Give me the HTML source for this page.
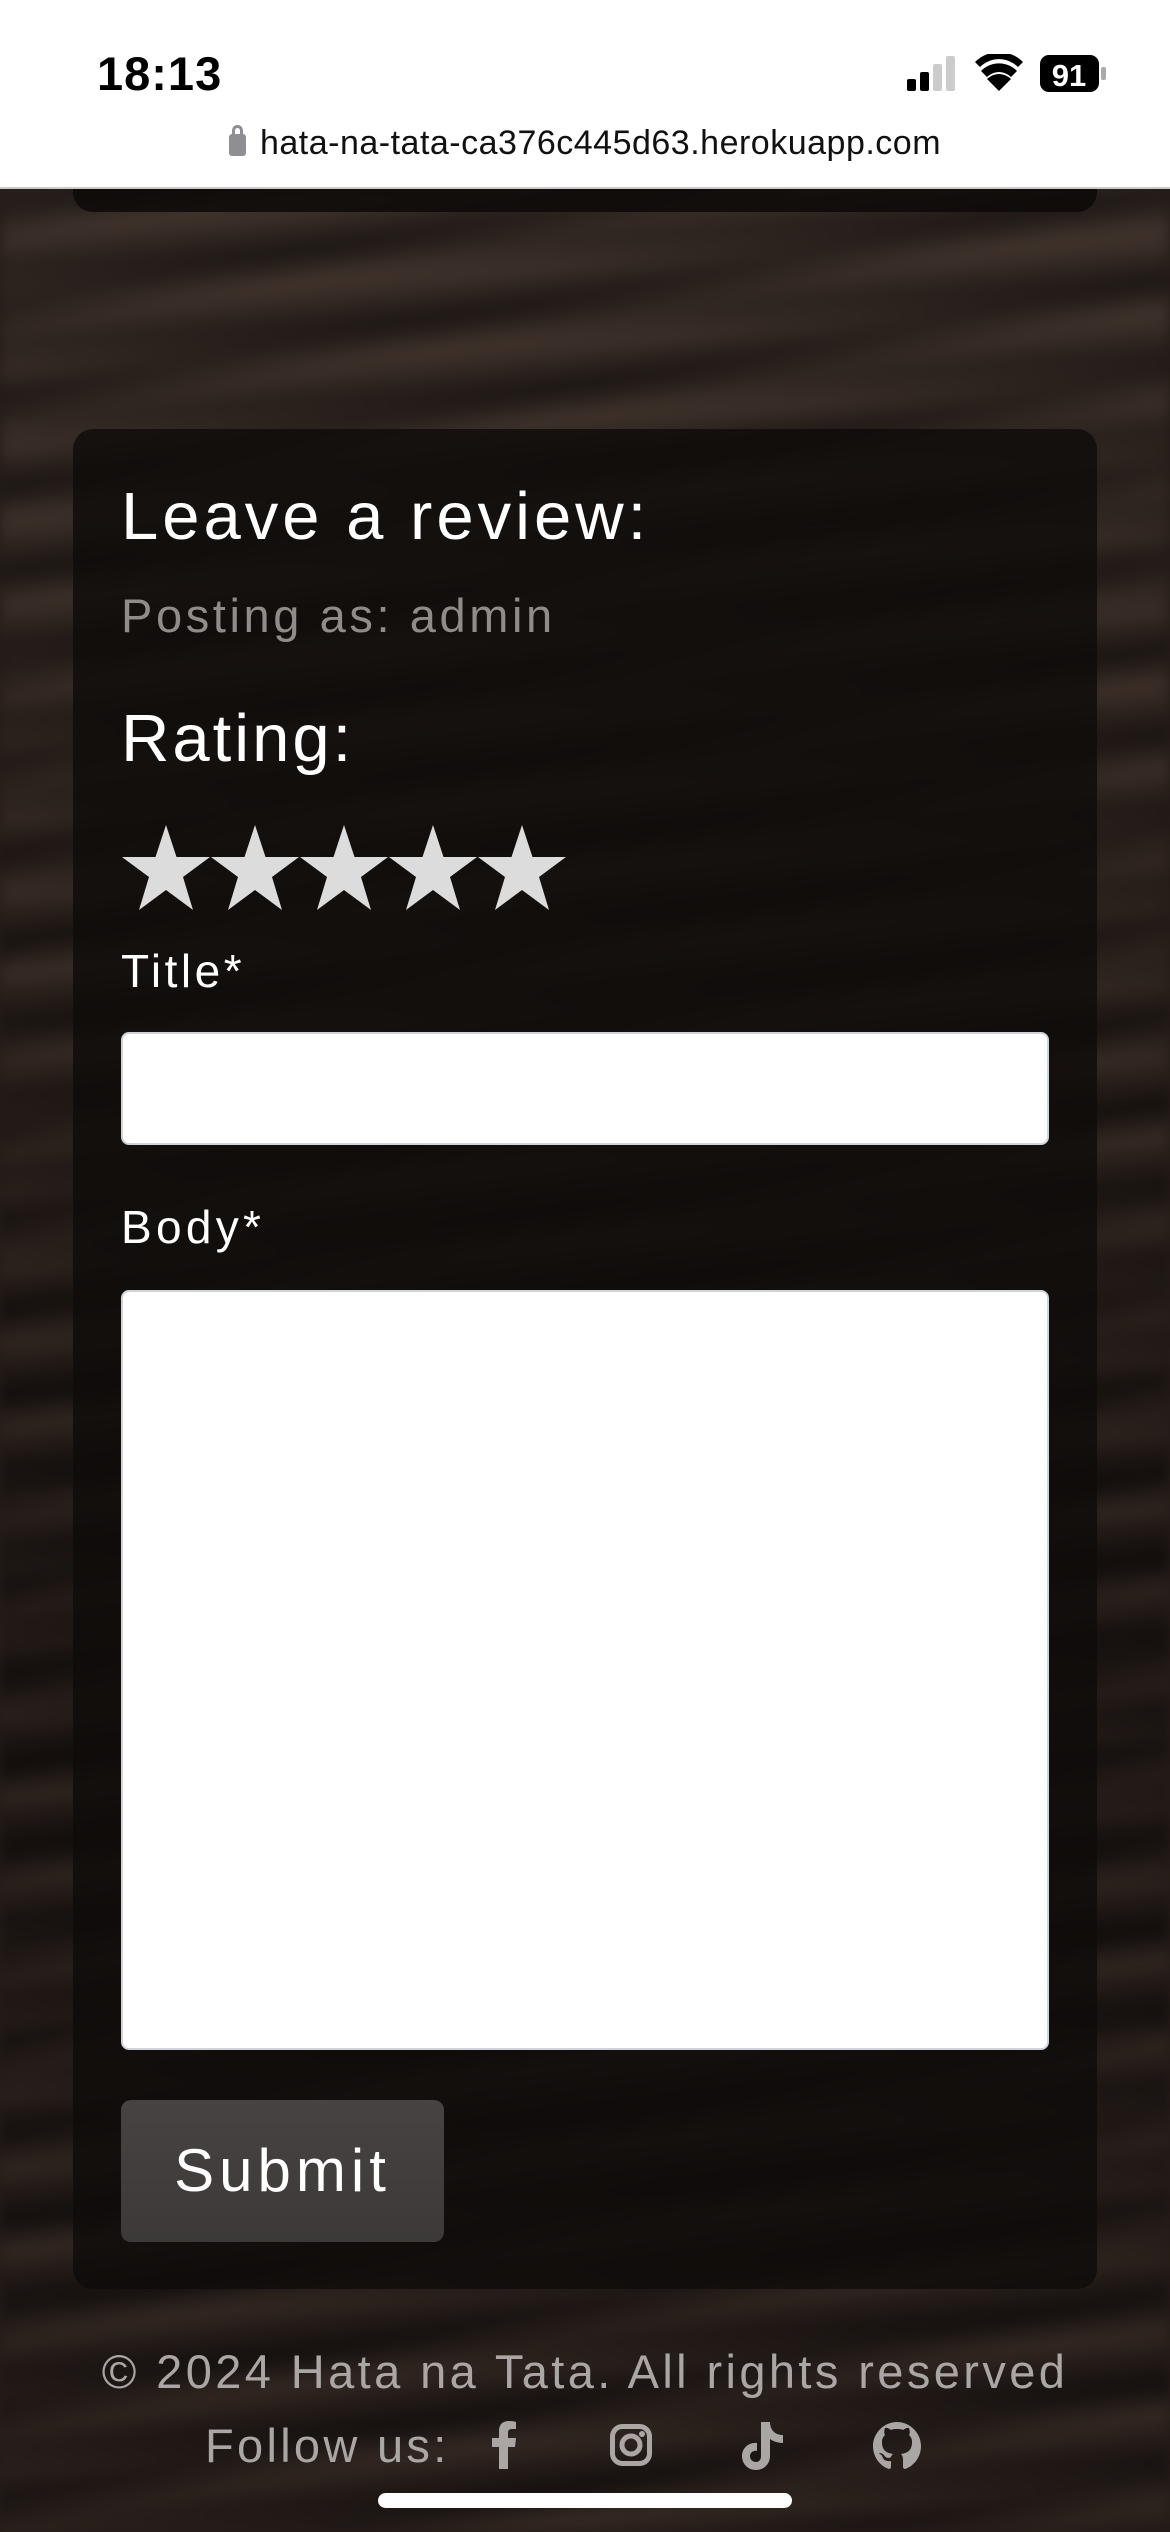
<!DOCTYPE html>
<html><head><meta charset="utf-8">
<style>
*{margin:0;padding:0;box-sizing:border-box}
html,body{width:1170px;height:2532px;overflow:hidden}
body{position:relative;font-family:"Liberation Sans",sans-serif;background:#251c18}
.bg{position:absolute;left:0;top:0;width:1170px;height:2532px;filter:blur(6px);
background:
repeating-linear-gradient(170deg,rgba(0,0,0,0) 0px,rgba(0,0,0,.28) 30px,rgba(90,72,62,.18) 60px,rgba(0,0,0,0) 90px),
repeating-linear-gradient(177deg,rgba(0,0,0,0) 0px,rgba(0,0,0,.3) 40px,rgba(70,58,50,.15) 75px),
linear-gradient(180deg,#3d312b 0%,#30251f 35%,#1f1714 65%,#2a201c 100%);}
.status{position:absolute;left:0;top:0;width:1170px;height:189px;background:#fff;border-bottom:2px solid #c9c9c9;z-index:5}
.time{position:absolute;left:97px;top:46px;font-size:47px;font-weight:bold;color:#000;letter-spacing:1px}
.url{position:absolute;left:0;width:1170px;top:124px;text-align:center;font-size:34px;color:#111;letter-spacing:.5px}
.lock{display:inline-block;width:17px;height:22px;background:#8e8e93;border-radius:3px;margin-right:14px;position:relative;top:2px}
.lock:before{content:"";position:absolute;left:3px;top:-9px;width:11px;height:12px;border:3px solid #8e8e93;border-bottom:none;border-radius:6px 6px 0 0;box-sizing:border-box}
.topcard{position:absolute;left:73px;top:160px;width:1024px;height:52px;background:rgba(12,9,8,.85);border-radius:0 0 20px 20px}
.card{position:absolute;left:73px;top:429px;width:1024px;height:1860px;background:rgba(14,11,10,.8);border-radius:20px}
.t{position:absolute;left:121px;color:#fff;white-space:nowrap}
h1{font-weight:normal}
.input{position:absolute;left:121px;width:928px;background:#fff;border:2px solid #cfd4da;border-radius:8px}
.btn{position:absolute;left:121px;top:2100px;width:323px;height:142px;background:linear-gradient(#474342,#3c3938);border-radius:10px;color:#fff;font-size:60px;text-align:center;line-height:142px;letter-spacing:5px}
.foot{position:absolute;left:0;width:1170px;text-align:center;color:#a9a6a4;font-size:47px;white-space:nowrap}
.home{position:absolute;left:378px;top:2493px;width:414px;height:15px;background:#fff;border-radius:8px}
</style></head><body>
<div class="bg"></div>
<div class="status">
<div class="time">18:13</div>
<svg style="position:absolute;left:905px;top:54px" width="205" height="40" viewBox="0 0 205 40">
<rect x="2" y="25" width="9" height="12" rx="2" fill="#000"/>
<rect x="15" y="18" width="9" height="19" rx="2" fill="#000"/>
<rect x="28" y="10" width="9" height="27" rx="2" fill="#ccc"/>
<rect x="41" y="2" width="9" height="35" rx="2" fill="#ccc"/>
<path d="M94 37 L82 25 A17 17 0 0 1 106 25 Z" fill="#000"/>
<path d="M76 19 A25 25 0 0 1 112 19 L106 25 A17 17 0 0 0 82 25 Z" fill="#000" transform="translate(0,-2)"/>
<path d="M70 13 A34 34 0 0 1 118 13 L113 18 A27 27 0 0 0 75 18 Z" fill="#000" transform="translate(0,-5)"/>
<rect x="135" y="1" width="59" height="37" rx="9" fill="#000"/>
<rect x="196" y="13" width="5" height="13" rx="2" fill="#aaa"/>
<text x="164" y="32" font-family="Liberation Sans" font-weight="bold" font-size="31" fill="#fff" text-anchor="middle">91</text>
</svg>
<div class="url"><span class="lock"></span>hata-na-tata-ca376c445d63.herokuapp.com</div>
</div>
<div class="topcard"></div>
<div class="card"></div>
<h1 class="t" style="top:478px;font-size:67px;letter-spacing:4px">Leave a review:</h1>
<div class="t" style="top:588px;font-size:47px;color:#8f8c8a;letter-spacing:3.6px">Posting as: admin</div>
<div class="t" style="top:700px;font-size:67px;letter-spacing:3px">Rating:</div>
<svg style="position:absolute;left:121px;top:824px" width="450" height="90" viewBox="0 0 450 90">
<g fill="#dcdcdc">
<path id="s" d="M45 1 L55.5 33 L89 33 L62 53 L72 86 L45 66 L18 86 L28 53 L1 33 L34.5 33 Z"/>
<use href="#s" x="89"/><use href="#s" x="178"/><use href="#s" x="267"/><use href="#s" x="356"/>
</g></svg>
<div class="t" style="top:944px;font-size:46px;letter-spacing:3.5px">Title*</div>
<div class="input" style="top:1032px;height:113px"></div>
<div class="t" style="top:1200px;font-size:46px;letter-spacing:4.3px">Body*</div>
<div class="input" style="top:1290px;height:760px"></div>
<div class="btn">Submit</div>
<div class="foot" style="top:2344px;letter-spacing:3.4px">© 2024 Hata na Tata. All rights reserved</div>
<div class="foot" style="top:2418px;text-align:left;left:205px;width:auto;letter-spacing:3.3px">Follow us:</div>
<svg style="position:absolute;left:485px;top:2418px" width="445" height="56" viewBox="0 0 445 56" fill="#a9a6a4">
<path d="M14 51 V29 H7 V20 H14 V13 C14 6 18 3 24 3 C27 3 30 3.5 31 4 V11 H27 C24 11 23 12.5 23 15 V20 H31 L30 29 H23 V51 Z"/>
<g transform="translate(125,6)" fill="none" stroke="#a9a6a4" stroke-width="5"><rect x="2.5" y="2.5" width="37" height="37" rx="10"/><circle cx="21" cy="21" r="9"/></g>
<circle cx="157" cy="16" r="3" />
<path d="M276 4 H285 C285 12 290 17 298 17 V25 C292 25 288 23 285 21 V38 C285 46 279 52 271 52 C263 52 257 46 257 38 C257 30 264 24 272 25 V33 C268 32 265 35 265 38 C265 42 268 44 271 44 C274 44 276 42 276 38 Z"/>
<path d="M412 4 C399 4 388 15 388 28 C388 39 395 48 404 51 C405 51 406 50 406 49 V43 C399 44 398 40 398 40 C397 37 395 36 395 36 C393 35 395 35 395 35 C397 35 399 37 399 37 C401 41 405 40 406 39 C406 38 407 37 408 36 C402 35 397 33 397 24 C397 21 398 19 400 17 C399 16 399 13 400 10 C400 10 402 9 406 12 C408 11 410 11 412 11 C414 11 416 11 418 12 C422 9 424 10 424 10 C425 13 425 16 424 17 C426 19 427 21 427 24 C427 33 422 35 416 36 C417 37 418 39 418 41 V49 C418 50 419 51 420 51 C429 48 436 39 436 28 C436 15 425 4 412 4 Z"/>
</svg>
<div class="home"></div>
</body></html>
